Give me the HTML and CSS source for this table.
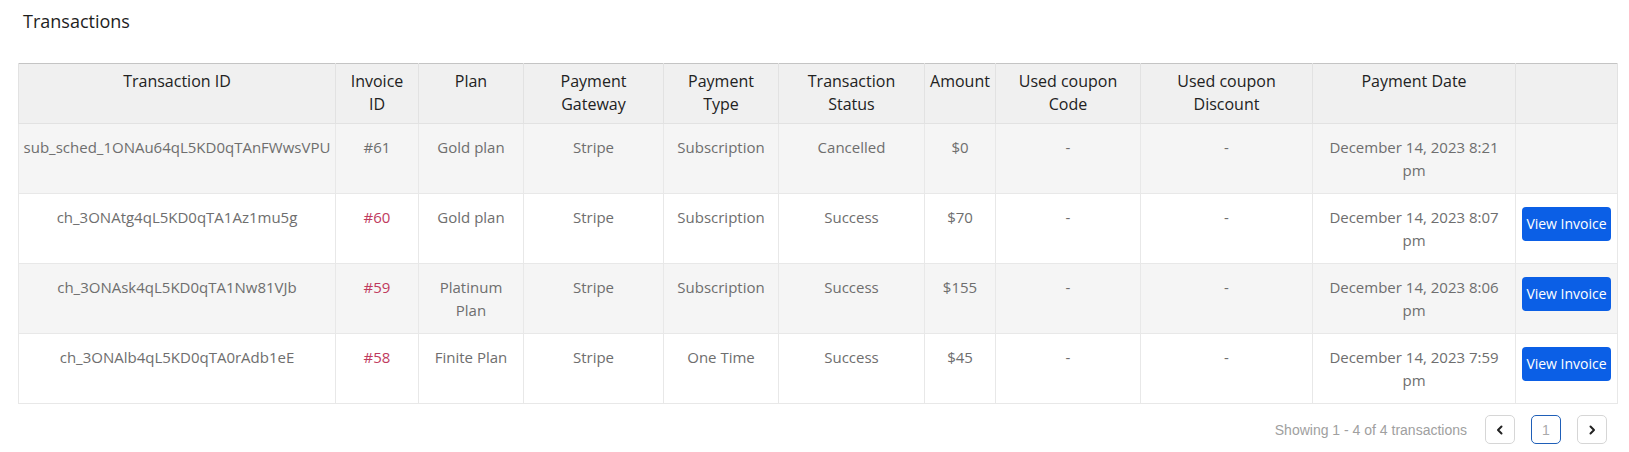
FILE: index.html
```html
<!DOCTYPE html>
<html lang="en">
<head>
<meta charset="utf-8">
<title>Transactions</title>
<link rel="stylesheet" href="styles.css">
</head>
<body>
<div class="page">
  <h2 class="title">Transactions</h2>
  <table class="tx">
    <colgroup>
      <col class="c1"><col class="c2"><col class="c3"><col class="c4"><col class="c5"><col class="c6"><col class="c7"><col class="c8"><col class="c9"><col class="c10"><col class="c11">
    </colgroup>
    <thead>
      <tr>
        <th>Transaction ID</th>
        <th>Invoice<br>ID</th>
        <th>Plan</th>
        <th>Payment<br>Gateway</th>
        <th>Payment<br>Type</th>
        <th>Transaction<br>Status</th>
        <th>Amount</th>
        <th>Used coupon<br>Code</th>
        <th>Used coupon<br>Discount</th>
        <th>Payment Date</th>
        <th></th>
      </tr>
    </thead>
    <tbody>
      <tr>
        <td>sub_sched_1ONAu64qL5KD0qTAnFWwsVPU</td>
        <td>#61</td>
        <td>Gold plan</td>
        <td>Stripe</td>
        <td>Subscription</td>
        <td>Cancelled</td>
        <td>$0</td>
        <td>-</td>
        <td>-</td>
        <td>December 14, 2023 8:21 pm</td>
        <td></td>
      </tr>
      <tr>
        <td>ch_3ONAtg4qL5KD0qTA1Az1mu5g</td>
        <td><a class="inv" href="#">#60</a></td>
        <td>Gold plan</td>
        <td>Stripe</td>
        <td>Subscription</td>
        <td>Success</td>
        <td>$70</td>
        <td>-</td>
        <td>-</td>
        <td>December 14, 2023 8:07 pm</td>
        <td><button class="btn">View Invoice</button></td>
      </tr>
      <tr>
        <td>ch_3ONAsk4qL5KD0qTA1Nw81VJb</td>
        <td><a class="inv" href="#">#59</a></td>
        <td>Platinum Plan</td>
        <td>Stripe</td>
        <td>Subscription</td>
        <td>Success</td>
        <td>$155</td>
        <td>-</td>
        <td>-</td>
        <td>December 14, 2023 8:06 pm</td>
        <td><button class="btn">View Invoice</button></td>
      </tr>
      <tr>
        <td>ch_3ONAlb4qL5KD0qTA0rAdb1eE</td>
        <td><a class="inv" href="#">#58</a></td>
        <td>Finite Plan</td>
        <td>Stripe</td>
        <td>One Time</td>
        <td>Success</td>
        <td>$45</td>
        <td>-</td>
        <td>-</td>
        <td>December 14, 2023 7:59 pm</td>
        <td><button class="btn">View Invoice</button></td>
      </tr>
    </tbody>
  </table>
  <div class="pager">
    <span class="showing">Showing 1 - 4 of 4 transactions</span>
    <button class="pg"><svg width="12" height="12" viewBox="0 0 12 12"><path d="M7.5 2.5 L4 6 L7.5 9.5" fill="none" stroke="#222" stroke-width="2" stroke-linecap="round" stroke-linejoin="round"/></svg></button>
    <button class="pg active">1</button>
    <button class="pg"><svg width="12" height="12" viewBox="0 0 12 12"><path d="M4.5 2.5 L8 6 L4.5 9.5" fill="none" stroke="#222" stroke-width="2" stroke-linecap="round" stroke-linejoin="round"/></svg></button>
  </div>
</div>
</body>
</html>
```
FILE: styles.css
```css
* { box-sizing: border-box; }
html, body { margin: 0; padding: 0; background: #fff; }
body { font-family: "Open Sans", "Noto Sans", sans-serif; }
.page { padding: 8px 12px 0 18px; }
.title {
  margin: 0 0 0 5px;
  font-size: 18px;
  line-height: 27px;
  font-weight: 500;
  color: #1e1e1e;
  height: 55px;
}
.tx {
  width: 1599px;
  table-layout: fixed;
  border-collapse: collapse;
  font-size: 15px;
  line-height: 22.5px;
  border-left: 1px solid #c4c4c4;
  border-top: 1px solid #c4c4c4;
  border-right: 1px solid #e0e0e0;
  border-bottom: 1px solid #e6e6e6;
}
.c1 { width: 317px; } .c2 { width: 83px; } .c3 { width: 105px; } .c4 { width: 140px; }
.c5 { width: 115px; } .c6 { width: 146px; } .c7 { width: 71px; } .c8 { width: 145px; }
.c9 { width: 172px; } .c10 { width: 203px; } .c11 { width: 102px; }
.tx th {
  background: #f0f0f0;
  color: #222;
  font-size: 16px;
  line-height: 22.5px;
  font-weight: 500;
  text-align: center;
  vertical-align: top;
  padding: 6px 2px 7px;
  border: 1px solid #e2e2e2;
  border-top: none;
  height: 60px;
}
.tx thead tr { border-bottom: 1px solid #dcdcdc; }
.tx td {
  color: #6e6e6e;
  text-align: center;
  vertical-align: top;
  padding: 12px 4px 12px;
  border: 1px solid #e8e8e8;
  height: 70px;
}
.tx tbody tr:nth-child(odd) td { background: #f5f5f5; }
.tx tbody tr:nth-child(even) td { background: #fff; }
.tx td:last-child { padding: 12px 6px; }
.inv { color: #c03a5e; text-decoration: none; }
.btn {
  display: block;
  width: 89px;
  height: 34px;
  margin: 1px auto 0;
  padding: 0;
  border: none;
  border-radius: 4px;
  background: #0b5fe6;
  color: #fff;
  font-family: "Open Sans", "Noto Sans", sans-serif;
  font-size: 14px;
  line-height: 20px;
}
.pager {
  display: flex;
  justify-content: flex-end;
  align-items: center;
  gap: 16px;
  margin-top: 11px;
  padding-right: 10px;
}
.showing {
  font-family: "Liberation Sans", Arial, sans-serif;
  font-size: 14px;
  color: #a0a0a0;
  margin-right: 2px;
}
.pg {
  width: 30px;
  height: 29px;
  display: flex;
  align-items: center;
  justify-content: center;
  padding: 0;
  background: #fff;
  border: 1px solid #d6d6d6;
  border-radius: 5px;
  font-family: "Liberation Sans", Arial, sans-serif;
  font-size: 14px;
  color: #aaa;
}
.pg.active { border-color: #1f5fb8; }
```
